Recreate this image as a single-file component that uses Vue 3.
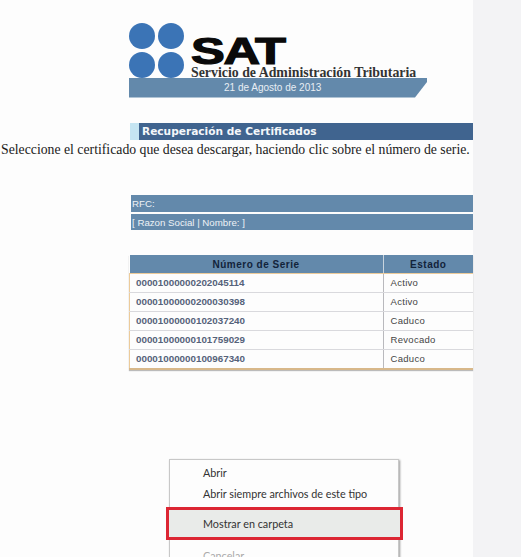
<script setup>
const rows = [
  ['00001000000202045114', 'Activo'],
  ['00001000000200030398', 'Activo'],
  ['00001000000102037240', 'Caduco'],
  ['00001000000101759029', 'Revocado'],
  ['00001000000100967340', 'Caduco']
]
</script>

<template>
  <div class="page">
    <main class="main">
      <header class="brand">
        <div class="top">
          <div class="dots">
            <span class="dot"></span><span class="dot"></span>
            <span class="dot"></span><span class="dot"></span>
          </div>
          <div class="names">
            <div class="sat">SAT</div>
            <div class="sub">Servicio de Administración Tributaria</div>
          </div>
        </div>
        <div class="date">21 de Agosto de 2013</div>
      </header>

      <h1 class="title"><span>Recuperación de Certificados</span></h1>
      <p class="intro">Seleccione el certificado que desea descargar, haciendo clic sobre el número de serie.</p>

      <div class="info">
        <div class="info-row">RFC:</div>
        <div class="info-row">[ Razon Social | Nombre: ]</div>
      </div>

      <table class="certs">
        <thead>
          <tr><th class="c1">Número de Serie</th><th>Estado</th></tr>
        </thead>
        <tbody>
          <tr v-for="r in rows" :key="r[0]">
            <td class="serial">{{ r[0] }}</td>
            <td class="state">{{ r[1] }}</td>
          </tr>
        </tbody>
      </table>
    </main>
    <aside class="side"></aside>

    <div class="menu">
      <div class="item first">Abrir</div>
      <div class="item">Abrir siempre archivos de este tipo</div>
      <div class="item active">Mostrar en carpeta</div>
      <div class="item off">Cancelar</div>
    </div>
  </div>
</template>

<style>
html, body { margin: 0; overflow: hidden; }
</style>

<style scoped>
.page { position: relative; display: flex; width: 521px; height: 557px; overflow: hidden; background: #f3f3f5; }
.main { width: 473px; height: 557px; flex: none; background: #fdfdfd; }
.side { flex: 1; }

.brand { width: 298px; margin-left: 129px; padding-top: 23px; }
.top { display: flex; height: 55px; }
.dots { display: grid; grid-template-columns: 26px 26px; grid-auto-rows: 26px; gap: 3px; width: 55px; }
.dot { border-radius: 50%; background: #3b74b6; }
.names { margin-left: 7px; width: 226px; padding-top: 14px; }
.sat { font: 900 37px/30px "Liberation Sans", sans-serif; color: #0a0a0a; -webkit-text-stroke: 1.2px #0a0a0a; transform: scaleX(1.37); transform-origin: left center; height: 30px; letter-spacing: -1px; }
.sub { margin-top: 1px; font: 700 13.85px/10px "Liberation Serif", serif; color: #333; white-space: nowrap; }
.date { height: 19.5px; background: #6389ab; clip-path: polygon(0 0, 100% 0, 100% 4px, 286px 100%, 0 100%); color: #e8eef4; font: 10px/20px "Liberation Sans", sans-serif; padding-left: 95px; box-sizing: border-box; }

.title { margin: 25.5px 0 0 130px; height: 17px; background: #c5e5f2; padding-left: 9px; }
.title span { display: block; height: 17px; background: #40648f; color: #f4f7fa; font: 700 10.6px/17px "DejaVu Sans", sans-serif; padding-left: 3px; }
.intro { margin: 1px 0 0 1px; font: 13.75px/18px "Liberation Serif", serif; color: #1a1a1a; white-space: nowrap; }

.info { margin: 36px 0 0 131px; display: flex; flex-direction: column; gap: 2px; }
.info-row { height: 16.5px; background: #6389ab; color: #eef2f6; font: 9.7px/17px "Liberation Sans", sans-serif; padding-left: 1px; }

.certs { margin: 25px 0 0 129px; width: 344px; border-collapse: collapse; table-layout: fixed; font-family: "Liberation Sans", sans-serif; box-shadow: 0 1px 1px #bbb; border-bottom: 2px solid #d8b88a; }
.certs th { height: 18px; padding: 0; background: #6389ab; color: #12233a; font-size: 10px; font-weight: 700; letter-spacing: .5px; border-bottom: 1px solid #eccb9a; }
.certs th.c1 { width: 253px; border-right: 1px solid #c8d4de; }
.certs td { height: 17px; padding: 0 0 1px; border-bottom: 1px solid #d9d9dd; background: #fdfdfd; font-size: 9.5px; }
.certs td.serial { padding-left: 6px; color: #55627a; font-weight: 700; font-size: 9.8px; border-right: 1px solid #b9b9bd; border-left: 1px solid #eccb9a; }
.certs td.state { padding-left: 7px; color: #444; letter-spacing: .3px; }

.menu { position: absolute; left: 169px; top: 459px; width: 230px; height: 110px; background: #fdfdfd; border: 1px solid #c8c8c8; box-shadow: 1px 1px 2px #999; box-sizing: border-box; font: 10.8px/21px "Lato", sans-serif; color: #333; }
.item { height: 21px; padding-left: 33px; white-space: nowrap; }
.item.first { margin-top: 2px; }
.item.active { position: relative; height: 29px; line-height: 29px; margin-top: 5px; background: #e9ebe9; outline: 3px solid #dc2633; outline-offset: -1px; margin-left: -2px; margin-right: -3px; padding-left: 35px; }
.item.off { margin-top: 7px; color: #aaa; }
</style>
